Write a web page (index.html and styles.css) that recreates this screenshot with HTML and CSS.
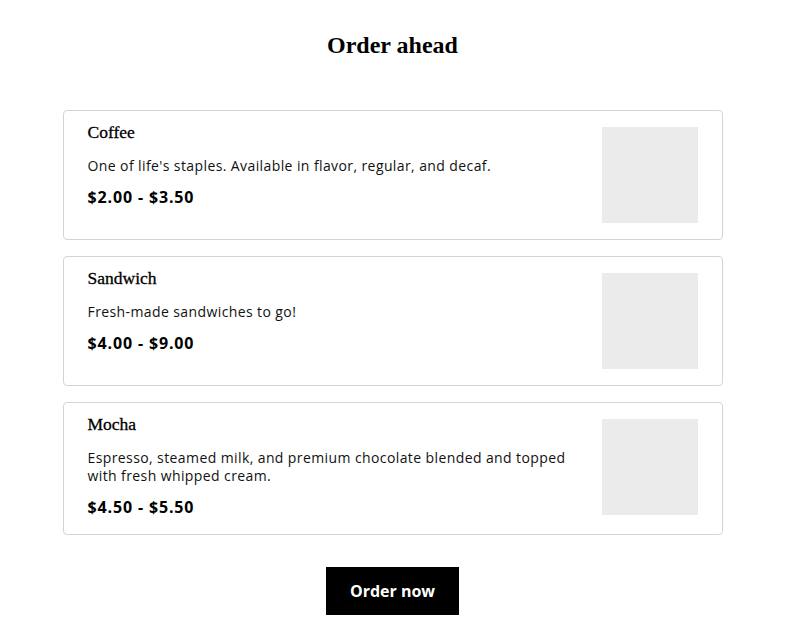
FILE: index.html
```html
<!DOCTYPE html>
<html lang="en">
<head>
<meta charset="utf-8">
<title>Order ahead</title>
<link rel="stylesheet" href="styles.css">
</head>
<body>
<main class="page">
  <h1 class="page-title">Order ahead</h1>
  <ul class="menu">
    <li class="item">
      <div class="item-text">
        <h2 class="item-name">Coffee</h2>
        <p class="item-desc">One of life's staples. Available in flavor, regular, and decaf.</p>
        <p class="item-price">$2.00 - $3.50</p>
      </div>
      <div class="item-image"></div>
    </li>
    <li class="item">
      <div class="item-text">
        <h2 class="item-name">Sandwich</h2>
        <p class="item-desc">Fresh-made sandwiches to go!</p>
        <p class="item-price">$4.00 - $9.00</p>
      </div>
      <div class="item-image"></div>
    </li>
    <li class="item">
      <div class="item-text">
        <h2 class="item-name">Mocha</h2>
        <p class="item-desc">Espresso, steamed milk, and premium chocolate blended and topped with fresh whipped cream.</p>
        <p class="item-price">$4.50 - $5.50</p>
      </div>
      <div class="item-image"></div>
    </li>
  </ul>
  <div class="actions">
    <button class="order-btn" type="button">Order now</button>
  </div>
</main>
</body>
</html>
```
FILE: styles.css
```css
* { box-sizing: border-box; }
html, body { margin: 0; padding: 0; background: #fff; }
body {
  font-family: "Open Sans", "Liberation Sans", sans-serif;
  color: #111;
}
.page {
  width: 660px;
  margin: 0 auto;
  padding-top: 32px;
}
.page-title {
  margin: 0 0 51px;
  font-family: "Liberation Serif", "DejaVu Serif", serif;
  font-size: 24px;
  font-weight: 700;
  text-align: center;
  color: #000;
}
.menu {
  list-style: none;
  margin: 0;
  padding: 0;
  display: flex;
  flex-direction: column;
  gap: 16px;
}
.item {
  display: flex;
  align-items: flex-start;
  gap: 24px;
  padding: 16px 24px;
  border: 1px solid #d4d4d4;
  border-radius: 4px;
}
.item-text { flex: 1; min-width: 0; }
.item-name {
  margin: -6px 0 0;
  font-family: "Liberation Serif", "DejaVu Serif", serif;
  font-size: 17.5px;
  line-height: 22px;
  font-weight: 400;
  color: #000;
  -webkit-text-stroke: 0.3px #000;
}
.item-desc {
  margin: 14px 0 0;
  font-size: 14px;
  line-height: 18px;
  color: #111;
  letter-spacing: 0.4px;
}
.item-price {
  margin: 11px 0 0;
  font-size: 16px;
  line-height: 22px;
  font-weight: 700;
  color: #000;
  letter-spacing: 0.85px;
}
.item-image {
  flex: none;
  width: 96px;
  height: 96px;
  background: #ebebeb;
}
.actions {
  display: flex;
  justify-content: center;
  padding: 32px 0 26px;
}
.order-btn {
  height: 48px;
  padding: 0 24px;
  border: 0;
  border-radius: 0;
  background: #000;
  color: #fff;
  font-family: "Open Sans", "Liberation Sans", sans-serif;
  font-size: 16px;
  font-weight: 700;
}
```
